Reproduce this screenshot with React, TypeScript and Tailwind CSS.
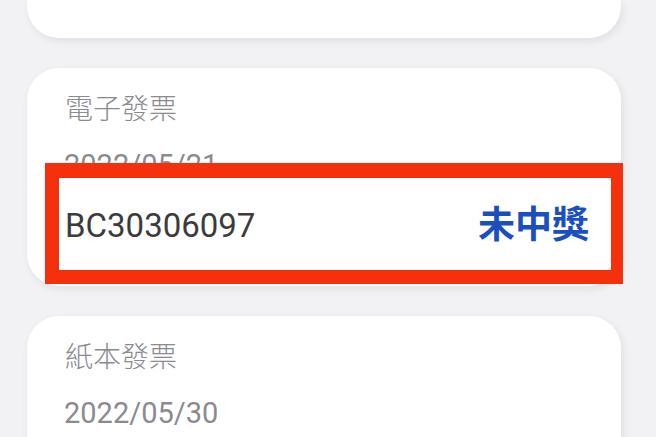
import React from "react";

const cjk = { fontFamily: 'Roboto, "Noto Sans CJK TC", "Noto Sans", sans-serif' };

function Card({ label, date, children }: { label: string; date: string; children?: React.ReactNode }) {
  return (
    <div className="relative w-[594px] rounded-[32px] bg-white shadow-[2px_3px_8px_rgba(0,0,0,0.08)] pl-[37px] pt-[24px] pb-[39px]">
      <div className="text-[28px] leading-[36px] font-light text-[#8b8a8f] pl-[1px]">{label}</div>
      <div className="mt-[19px] text-[29px] leading-[36px] text-[#8b8a8f]">{date}</div>
      {children}
    </div>
  );
}

export default function App() {
  return (
    <div className="w-[656px] h-[437px] overflow-hidden bg-[#f2f1f4] pl-[27px]" style={cjk}>
      <div className="w-[594px] h-[38px] rounded-b-[32px] bg-white shadow-[2px_3px_8px_rgba(0,0,0,0.08)]" />
      <div className="mt-[30px]">
        <Card label="電子發票" date="2022/05/21">
          <div className="mt-[24px] h-[40px]" />
          <div className="absolute left-[18px] top-[95px] w-[578px] h-[121px] border-[14px] border-r-[12px] border-t-[15px] border-[#f4300d] bg-white flex items-center justify-between pl-[6px] pr-[22px]">
            <span className="text-[33px] leading-[40px] text-[#3b3b3e] mt-[4px]">BC30306097</span>
            <span className="text-[37px] leading-[44px] font-bold text-[#1b4fbf] mt-[4px]">未中獎</span>
          </div>
        </Card>
      </div>
      <div className="mt-[30px]">
        <Card label="紙本發票" date="2022/05/30" />
      </div>
    </div>
  );
}
